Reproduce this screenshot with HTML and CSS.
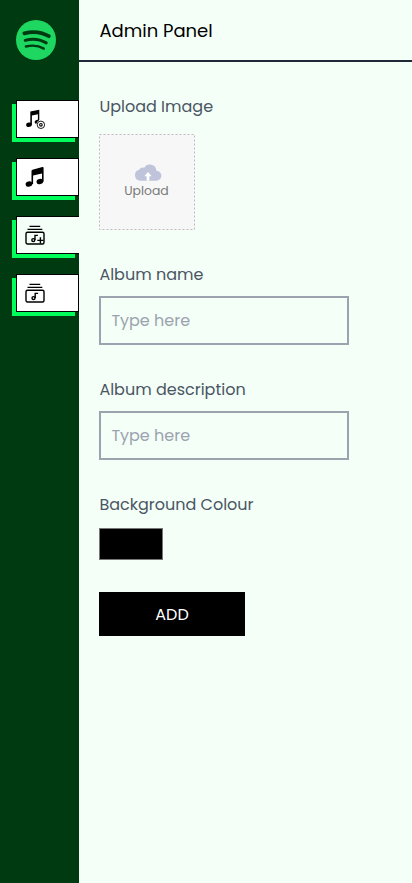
FILE: index.html
```html
<!DOCTYPE html>
<html lang="en">
<head>
<meta charset="utf-8">
<meta name="viewport" content="width=device-width, initial-scale=1">
<title>Admin Panel</title>
<link rel="stylesheet" href="styles.css">
</head>
<body>
<div class="app">
  <aside class="sidebar">
    <svg class="logo" viewBox="0 0 40 40">
      <circle cx="20" cy="20" r="20" fill="#1ed760"/>
      <g fill="none" stroke="#003a10" stroke-linecap="round">
        <path d="M8.300 13.400C16 11.400 25.500 12.100 32.900 16.200" stroke-width="3.700"/>
        <path d="M9.200 20.400C16 18.400 24 19.200 30.200 22.900" stroke-width="3"/>
        <path d="M9.900 26.500C16 25 22.500 25.400 27.800 28.600" stroke-width="2.400"/>
      </g>
    </svg>
    <nav class="nav">
      <a class="nav-link">
        <svg class="nav-icon" viewBox="0 0 20 20">
          <path d="M5.300 2.600L14.300.8V11H12.900V5.200L6.900 6.600V15.500H5.300Z"/>
          <ellipse cx="4" cy="15.700" rx="2.900" ry="2.200" transform="rotate(-15 4 15.700)"/>
          <ellipse cx="12" cy="12.900" rx="2.400" ry="2" transform="rotate(-15 12 12.900)"/>
          <circle cx="15.900" cy="15.800" r="4.600" fill="#fff"/>
          <circle cx="15.900" cy="15.800" r="3.700" fill="none" stroke="#000" stroke-width=".9"/>
          <circle cx="15.900" cy="15.800" r="1.300" fill="none" stroke="#000" stroke-width="1.100"/>
        </svg>
      </a>
      <a class="nav-link">
        <svg class="nav-icon" viewBox="0 0 20 20">
          <path d="M6.500 4Q6.500 3 7.500 2.700L17.400.1Q18.600-.1 18.600 1V14.500H17V6.500L8.100 8.600V17H6.500Z"/>
          <ellipse cx="4" cy="17" rx="3.400" ry="2.700" transform="rotate(-15 4 17)"/>
          <ellipse cx="14.900" cy="14.500" rx="3.400" ry="2.700" transform="rotate(-15 14.900 14.500)"/>
        </svg>
      </a>
      <a class="nav-link active">
        <svg class="nav-icon" viewBox="0 0 20 20">
          <path d="M4.500 1.400H15.200M2.500 4.400H17.300" class="line"/>
          <rect x="1" y="7.200" width="18" height="11.800" rx="1.500" class="line"/>
          <circle cx="8.300" cy="15.100" r="1.500" class="line"/>
          <path d="M10 15.100V10.400H12.900" class="line"/>
          <path d="M15.400 12.200V18.500M12.300 15.400H18.600" class="line"/>
        </svg>
      </a>
      <a class="nav-link">
        <svg class="nav-icon" viewBox="0 0 20 20">
          <path d="M4.500 1.400H15.200M2.500 4.400H17.300" class="line"/>
          <rect x="1" y="7.200" width="18" height="11.800" rx="1.500" class="line"/>
          <circle cx="8.500" cy="15.100" r="1.500" class="line"/>
          <path d="M10.200 15.100V10.400H13.100" class="line"/>
        </svg>
      </a>
    </nav>
  </aside>
  <main class="main">
    <header class="header"><h1 class="title">Admin Panel</h1></header>
    <form class="form">
      <div class="field upload-field">
        <span class="label">Upload Image</span>
        <div class="upload">
          <svg class="dash" viewBox="0 0 96 96"><rect x=".5" y=".5" width="95" height="95"/></svg>
          <svg class="cloud" viewBox="0 0 27 16">
            <path d="M6 16A5.400 5.400 0 0 1 5 5.400A4.200 4.200 0 0 1 9.900 3.300A6.300 6.300 0 0 1 21.600 6.200A4.900 4.900 0 0 1 21.500 16Z" fill="#bfc4da"/>
            <path d="M13.500 7.600L17.100 11.600H14.800V16H12.200V11.600H9.900Z" fill="#fff"/>
          </svg>
          <span class="upload-text">Upload</span>
        </div>
      </div>
      <div class="field">
        <label class="label" for="name">Album name</label>
        <input class="input" id="name" type="text" placeholder="Type here">
      </div>
      <div class="field">
        <label class="label" for="desc">Album description</label>
        <input class="input" id="desc" type="text" placeholder="Type here">
      </div>
      <div class="field colour-field">
        <span class="label">Background Colour</span>
        <div class="swatch"></div>
      </div>
      <button class="add" type="button">ADD</button>
    </form>
  </main>
</div>
</body>
</html>
```
FILE: styles.css
```css
* { box-sizing: border-box; }
body {
  margin: 0;
  background: #f3fff7;
  color: #4b5563;
  font: 400 16px/24px Poppins, Inter, sans-serif;
}
.app { display: flex; height: 883px; overflow: hidden; }
.sidebar { flex: 0 0 79px; padding: 20px 0 0 16px; background: #003a10; }
.logo { display: block; width: 40px; height: 40px; }
.nav { display: flex; flex-direction: column; gap: 20px; margin-top: 40px; }
.nav-link {
  display: flex;
  align-items: center;
  height: 38px;
  padding-left: 8px;
  background: #fff;
  border: 1px solid #000;
  box-shadow: -4px 4px 0 #00ff5b;
}
.active { background: #f3fff7; border-right: 0; }
.nav-icon { width: 20px; height: 20px; overflow: visible; }
.line { fill: none; stroke: #000; stroke-width: 1.4; }
.main { flex: 1; min-width: 0; }
.header {
  display: flex;
  align-items: center;
  height: 62px;
  padding: 2px 0 0 20.4px;
  border-bottom: 2px solid #1f2937;
}
.title { margin: 0; color: #000; font-size: 18px; font-weight: 400; line-height: 28px; }
.form { display: flex; flex-direction: column; align-items: flex-start; gap: 32px; padding: 33px 20px; }
.field { display: flex; flex-direction: column; gap: 9px; }
.field + .field { margin-top: 1px; }
.upload-field { gap: 15px; }
.colour-field { gap: 11px; }
.label { padding-left: .4px; white-space: nowrap; }
.upload {
  position: relative;
  display: flex;
  flex-direction: column;
  align-items: center;
  width: 96px;
  height: 96px;
  padding-top: 30px;
  background: #f7f7f8;
}
.dash { position: absolute; inset: 0; fill: none; stroke: #c3b9c1; stroke-dasharray: 2 2; }
.cloud { width: 28px; height: 17px; margin-left: 1px; }
.upload-text { padding-right: 1px; font-size: 12.4px; line-height: 19px; color: #777; }
.input {
  width: 250px;
  height: 49px;
  padding: 10px 10px 10px 10.4px;
  background: transparent;
  border: 2px solid #9ca3af;
  border-radius: 0;
  font: inherit;
  outline: 0;
}
.input::placeholder { color: #9ca3af; opacity: 1; }
.swatch { width: 64px; height: 32px; background: #000; border: 1px solid #767676; }
.add { width: 146px; height: 44px; padding: 2px 0 0; border: 0; background: #000; color: #fff; font: inherit; }
```
